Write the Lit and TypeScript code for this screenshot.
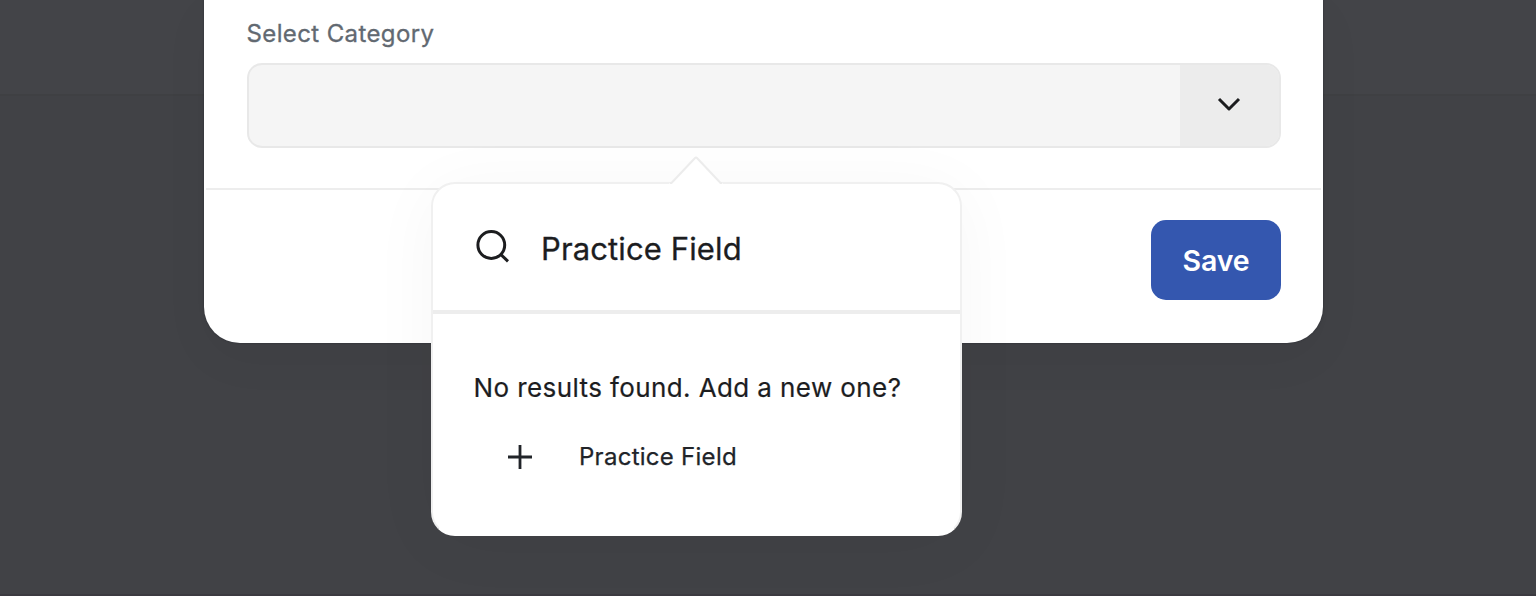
import { LitElement, html, css } from "lit";
import { customElement, property } from "lit/decorators.js";

@customElement("search-popover")
class SearchPopover extends LitElement {
  @property() query = "";

  static styles = css`
    :host {
      display: block;
      box-sizing: border-box;
      background: #fff;
      border: 2px solid #f0f0f0;
      border-bottom-color: #fff;
      border-radius: 24px;
      box-shadow: 0 8px 70px rgba(0, 0, 0, 0.04);
      color: #1c1d1f;
    }
    .arrow {
      position: absolute;
      left: 235px;
      top: -29px;
      width: 56px;
      height: 30px;
      display: block;
    }
    .search {
      display: flex;
      align-items: center;
      height: 129.5px;
      box-sizing: border-box;
      padding: 3px 40px 0 42px;
      gap: 30px;
      font-size: 31px;
      border-bottom: 4px solid #ededed;
    }
    .search svg {
      width: 36px;
      height: 36px;
      margin-top: -2px;
    }
    .empty {
      padding: 56.5px 0 0 40.5px;
      font-size: 26px;
      line-height: 36px;
      white-space: nowrap;
    }
    .add {
      display: flex;
      align-items: center;
      padding: 33px 0 0 73px;
      gap: 45px;
      font-size: 24px;
      line-height: 36px;
      color: #212429;
    }
    .add svg {
      width: 28px;
      height: 28px;
    }
    .query {
      letter-spacing: 0.12px;
      -webkit-text-stroke: 0.3px currentColor;
    }
    .message {
      letter-spacing: 0.4px;
      -webkit-text-stroke: 0.2px currentColor;
    }
    .option {
      letter-spacing: 0.27px;
      -webkit-text-stroke: 0.25px currentColor;
    }
  `;

  render() {
    return html`
      <svg class="arrow" viewBox="0 0 56 30">
        <path d="M1 30 V28.5 H3 L27 3 Q28 2 29 3 L53 28.5 H55 V30 Z" fill="#fff" />
        <path d="M2 28 H3.5 L27 3 Q28 2 29 3 L52.5 28 H54" fill="none" stroke="#ececec" stroke-width="2" />
      </svg>
      <div class="search">
        <svg viewBox="0 0 36 36" fill="none" stroke="#1c1d1f" stroke-width="3">
          <circle cx="16.3" cy="16" r="13.4" />
          <path d="M25.5 25.2 L33 32.3" />
        </svg>
        <span class="query">${this.query}</span>
      </div>
      <div class="empty"><span class="message">No results found. Add a new one?</span></div>
      <div class="add">
        <svg viewBox="0 0 28 28" fill="none" stroke="#212429" stroke-width="2.8">
          <path d="M14 2 V26 M2 14 H26" />
        </svg>
        <span class="option">${this.query}</span>
      </div>
    `;
  }
}

@customElement("app-root")
class AppRoot extends LitElement {
  static styles = css`
    :host {
      display: block;
      height: 596px;
      overflow: hidden;
      position: relative;
      box-sizing: border-box;
      background: linear-gradient(#434448 0 94px, #3f4043 94px 96px, #414246 96px 594px, #3b3a40 594px);
      font-family: Inter, "Liberation Sans", sans-serif;
    }
    .dialog {
      width: 1119px;
      height: 343px;
      margin-left: 204px;
      box-sizing: border-box;
      background: #fff;
      border-radius: 0 0 36px 36px;
      box-shadow: 0 0 2px rgba(20, 22, 32, 0.5), 0 16px 50px rgba(0, 0, 0, 0.04);
      overflow: hidden;
    }
    .body {
      height: 188px;
      box-sizing: border-box;
      padding: 18px 42px 0 42.5px;
    }
    .label {
      display: block;
      height: 32px;
      line-height: 32px;
      font-size: 24px;
      letter-spacing: 0.38px;
      -webkit-text-stroke: 0.3px currentColor;
      color: #626971;
    }
    .field {
      display: flex;
      justify-content: flex-end;
      height: 85px;
      margin-top: 13px;
      box-sizing: border-box;
      border: 2px solid #e8e8e8;
      border-radius: 15px;
      background: #f5f5f5;
      overflow: hidden;
    }
    .toggle {
      width: 99px;
      background: #ececec;
      display: flex;
      align-items: center;
      justify-content: center;
    }
    .toggle svg {
      width: 24px;
      height: 16px;
      margin-right: 2px;
      margin-top: -3px;
    }
    .footer {
      display: flex;
      justify-content: flex-end;
      margin: 0 2px;
      border-top: 2px solid #ededed;
      padding: 30px 40px 0 0;
    }
    .save {
      width: 130px;
      height: 80px;
      padding: 0;
      border: 0;
      border-radius: 15px;
      background: #3457af;
      color: #fff;
      font: 600 28.5px Inter, sans-serif;
      letter-spacing: -0.1px;
    }
    search-popover {
      position: absolute;
      left: 431px;
      top: 182px;
      width: 531px;
      height: 353.5px;
    }
  `;

  render() {
    return html`
      <div class="dialog">
        <div class="body">
          <span class="label">Select Category</span>
          <div class="field">
            <div class="toggle">
              <svg viewBox="0 0 24 16" fill="none" stroke="#1c1d1f" stroke-width="3">
                <path d="M2 3 L12 13 L22 3" stroke-linejoin="round" />
              </svg>
            </div>
          </div>
        </div>
        <div class="footer"><button class="save">Save</button></div>
      </div>
      <search-popover query="Practice Field"></search-popover>
    `;
  }
}
